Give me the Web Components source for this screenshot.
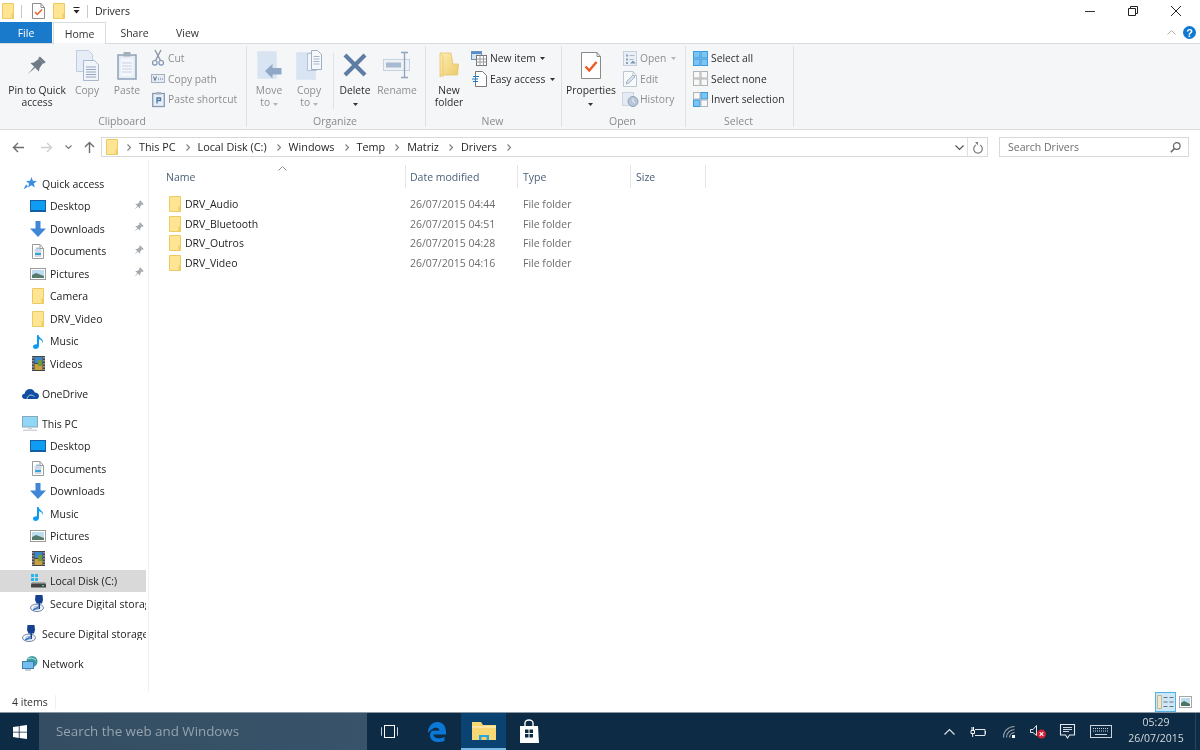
<!DOCTYPE html>
<html><head><meta charset="utf-8"><title>Drivers</title>
<style>
html,body{margin:0;padding:0;width:1200px;height:750px;overflow:hidden;background:#fff}
body{font:10.5px/12px "Open Sans","Noto Sans",sans-serif;color:#1e1e1e;display:flex;flex-direction:column;filter:blur(.3px)}
</style></head><body>
<title-bar></title-bar>
<ribbon-tabs></ribbon-tabs>
<ribbon-bar></ribbon-bar>
<address-bar></address-bar>
<main-pane></main-pane>
<status-bar></status-bar>
<task-bar></task-bar>
<script>
const page=(l='#fff',s='#8d8d8d',w=12,h=15)=>`<path d="M.5.5H${w-4}L${w-.5} 4.5V${h-.5}H.5z" fill="${l}" stroke="${s}"/><path d="M${w-4} .5V4.5H${w-.5}" fill="none" stroke="${s}"/>`;
const four=(a,b,c,d,sa,sb,sc,sd)=>`<rect x=".5" y=".5" width="6.500" height="6.500" fill="${a}" stroke="${sa}"/><rect x="8" y=".5" width="6.500" height="6.500" fill="${b}" stroke="${sb}"/><rect x=".5" y="8" width="6.500" height="6.500" fill="${c}" stroke="${sc}"/><rect x="8" y="8" width="6.500" height="6.500" fill="${d}" stroke="${sd}"/>`;
const ICONS={
folder:[12,16,`<path d="M.5.5h11v15H.5z" fill="#fde594" stroke="#eec962"/><path d="M9.500 11l2-1.500v6h-2z" fill="#f2cb63"/>`],
bigfolder:[20,26,`<defs><linearGradient id="g" x1="0" y1="0" x2="1" y2="1"><stop offset="0" stop-color="#fdeeb2"/><stop offset="1" stop-color="#ecc869"/></linearGradient></defs><path d="M1 1h11l2 11h5.500l-1 11H4L1 25z" fill="url(#g)" stroke="#e6c56c" stroke-width=".8"/><path d="M1 1l3 3v21" fill="none" stroke="#eccb76"/>`],
props:[13,16,page('#fff','#8d8d8d',13,16)+`<path d="M3 9l2.300 2.500L10 6.500" fill="none" stroke="#e8622a" stroke-width="1.500"/>`],
propsL:[20,27,page('#fff','#8a8a8a',20,27)+`<path d="M4.500 14.500l3.800 4L15.500 10" fill="none" stroke="#ea5a1e" stroke-width="2.400"/>`],
minidrop:[7,8,`<path d="M.5 .5h6" stroke="#222"/><path d="M.5 3h6L3.500 6.500z" fill="#222"/>`],
caret:[5,3,`<path d="M0 0h5L2.500 3z" fill="#333"/>`],
caretL:[5,3,`<path d="M0 0h5L2.500 3z" fill="#b5b5b5"/>`],
pinL:[20,20,`<g transform="translate(-2 2) rotate(45 10 10)" fill="#6e7a86"><rect x="6" y="-1" width="8" height="2.500"/><path d="M7 1.500h6l1 6 2 3H4l2-3z"/><path d="M9.300 10.500h1.400L10 20z"/></g>`],
pin:[10,10,`<g transform="rotate(45 5 5)" fill="#a4a9ae"><rect x="2.500" y="-.5" width="5" height="1.500"/><path d="M3.500 1h3l.5 3 1.500 1.500h-7L3 4z"/><path d="M4.500 5.500h1L5 10z"/></g>`],
copyL:[23,31,`<path d="M.5.5h12l4 4v17H.5z" fill="#e6edf6" stroke="#bfcde0"/><path d="M7.500 10.500h11l4 4v16h-15z" fill="#f1f5fa" stroke="#a9b9cd"/><path d="M10 17h10M10 19.500h10M10 22h10M10 24.500h10M10 27h10" stroke="#93a6bf"/>`],
pasteL:[20,29,`<rect x="1" y="4" width="18" height="24" fill="#e3ebf5" stroke="#8fa3bb" stroke-width="1.500"/><rect x="3.500" y="7.500" width="13" height="18" fill="#f3f6fa"/><path d="M5 12h10M5 15h10M5 18h10M5 21h10" stroke="#c9d4e2"/><rect x="6.500" y="1" width="7" height="4.500" fill="#a5afbb"/>`],
cut:[12,16,`<path d="M3 0l5.500 10.500M9 0L3.500 10.500" stroke="#8a97a8" stroke-width="1.400" fill="none"/><circle cx="2.800" cy="12.800" r="2.300" fill="none" stroke="#7f94b4" stroke-width="1.200"/><circle cx="9.200" cy="12.800" r="2.300" fill="none" stroke="#7f94b4" stroke-width="1.200"/>`],
copypath:[14,9,`<rect x=".5" y=".5" width="13" height="8" fill="#e4ebf3" stroke="#a5b1c2"/><path d="M2.500 2.500l1.500 4 1.500-4M7 5h1M9 5h1M11 5h1" fill="none" stroke="#60748f"/>`],
pasteshort:[13,15,`<rect x=".7" y="1.500" width="11.600" height="13" fill="#e8eef6" stroke="#849ab6" stroke-width="1.300"/><rect x="4" y="0" width="5" height="2.500" fill="#a6b1bf"/><path d="M5 11.500V6h3.500v2.500H5" fill="none" stroke="#4e78a8" stroke-width="1.300"/>`],
moveL:[25,29,`<rect x=".5" y=".5" width="19" height="27" fill="#d8e4f2" stroke="#dfe8f3"/><path d="M8 20l7.500-7v4h9v6.500h-9v4z" fill="#8ea8c6"/>`],
copyto:[26,30,`<rect x=".5" y="2.500" width="19" height="27" fill="#d8e4f2" stroke="#dfe8f3"/><path d="M11.500 3.500h9v17h-9z" fill="#f2f5fa" stroke="#b2c1d4"/><path d="M15.500.5h6l4 4v15h-10z" fill="#f6f8fb" stroke="#9fb0c6"/><path d="M17.500 6.500h6M17.500 9h6M17.500 11.500h6M17.500 14h6" stroke="#a5b5c9"/>`],
del:[24,24,`<path d="M2 2l20 20M22 2L2 22" stroke="#5f7ca4" stroke-width="4.200"/>`],
rename:[28,26,`<rect x=".5" y="7.500" width="26" height="11" fill="#eef2f7" stroke="#c7d2df"/><rect x="3" y="10.500" width="15" height="5" fill="#a8bad0"/><path d="M18 .5h3.500M25 .5h-3.500M21.500.5v25M18 25.500h7" fill="none" stroke="#8ea4bf" stroke-width="1.300"/>`],
newitem:[16,15,`<rect x=".5" y=".5" width="10" height="8" fill="#d5e3f3" stroke="#6f90b7"/><rect x="1" y="1" width="9" height="2" fill="#5390d0"/><rect x="5.500" y="4.500" width="10" height="10" fill="#fff" stroke="#777"/><path d="M5.500 8h10M5.500 11h10M9 4.500v10M12.500 4.500v10" stroke="#999"/>`],
easy:[15,16,`<path d="M3.500.5h7l4 4v11h-11z" fill="#fff" stroke="#777"/><path d="M1 5.500h6M0 8h6M1 10.500h5" stroke="#1679cf" stroke-width="1.100"/>`],
open:[14,15,`<rect x=".5" y=".5" width="13" height="14" fill="#eaeff6" stroke="#c6d0dd"/><path d="M3 3.500h2v2H3zM3 7.500h2v2H3zM3 11h2v2H3z" fill="#8aa0bd"/><path d="M6.500 4.500h5M6.500 8.500h4" stroke="#a9b8ca"/><path d="M7 12.500l3-3 3 3z" fill="#7f96b4"/>`],
edit:[14,16,page('#f7f9fb','#bcc6d3',14,16)+`<path d="M3 13l1-3 6-6 2 2-6 6z" fill="#d6e1ee" stroke="#a7b8cc"/>`],
history:[17,15,`<rect x=".5" y=".5" width="11" height="13" fill="#e4ebf4" stroke="#ccd5e1"/><circle cx="11" cy="9.500" r="5" fill="#b7c5d7" stroke="#8fa3bc"/><path d="M11 6.500v3l2 1.500" fill="none" stroke="#f4f7fa"/>`],
selall:[15,15,four('#7cc4f2','#7cc4f2','#7cc4f2','#7cc4f2','#3a9ae0','#3a9ae0','#3a9ae0','#3a9ae0')],
selnone:[15,15,four('#f8f8f8','#f8f8f8','#f8f8f8','#f8f8f8','#b3b3b3','#b3b3b3','#b3b3b3','#b3b3b3')],
selinv:[15,15,four('#f8f8f8','#7cc4f2','#7cc4f2','#f8f8f8','#b3b3b3','#3a9ae0','#3a9ae0','#b3b3b3')],
back:[12,11,`<path d="M12 5.500H1.500M6 1L1.500 5.500 6 10" fill="none" stroke="#6d6d6d" stroke-width="1.400"/>`],
fwd:[12,11,`<path d="M0 5.500h10.500M6 1l4.500 4.500L6 10" fill="none" stroke="#cfcfcf" stroke-width="1.400"/>`],
down:[7,4,`<path d="M.5.5l3 3 3-3" fill="none" stroke="#777" stroke-width="1.200"/>`],
up:[11,12,`<path d="M5.500 12V1.500M1 6l4.500-4.500L10 6" fill="none" stroke="#6d6d6d" stroke-width="1.400"/>`],
chev:[4,7,`<path d="M.5.5l3 3-3 3" fill="none" stroke="#7d7d7d" stroke-width="1.100"/>`],
chevd:[9,5,`<path d="M.5.5l4 4 4-4" fill="none" stroke="#555" stroke-width="1.200"/>`],
refresh:[10,11,`<path d="M3 3a4.300 4.300 0 1 0 4 0" fill="none" stroke="#7b7b7b" stroke-width="1.200"/><path d="M2 0l3 0v3.500z" fill="#7b7b7b"/>`],
search:[11,11,`<circle cx="6.800" cy="4" r="3.300" fill="none" stroke="#666" stroke-width="1.200"/><path d="M4.500 6.500L.8 10.300" stroke="#666" stroke-width="1.600"/>`],
star:[14,13,`<path d="M8.500 0l1.400 3.800 4 .3-3.100 2.500 1 3.900-3.300-2.200-3.400 2.200 1-3.900-3-2.500 4-.3z" fill="#3b8ee0"/><path d="M3 7.500L.5 12.500 5 9.500z" fill="#3b8ee0"/>`],
desktop:[16,12,`<rect x=".5" y=".5" width="15" height="11" fill="#0f9cf3" stroke="#1b5f9f"/><path d="M1 10.500h14" stroke="#0e5ea6"/>`],
dl:[16,16,`<path d="M5.500 0h5v7.500H16L8 16 0 7.500h5.500z" fill="#3f87d6"/>`],
docs:[12,15,page('#fff','#9a9a9a',12,15)+`<path d="M2.500 6h7M2.500 8h7M2.500 12h7" stroke="#9fb4c8"/><rect x="3" y="9" width="6" height="2" fill="#3aa0dc"/><rect x="4" y="3.500" width="4" height="1.500" fill="#9dc1dc"/>`],
pics:[16,12,`<rect x=".5" y=".5" width="15" height="11" fill="#fff" stroke="#9c9c9c"/><rect x="2" y="2" width="12" height="8" fill="#bcdcef"/><path d="M2 7l4-2 8 3v2H2z" fill="#557a6c"/>`],
music:[11,15,`<path d="M4 1h1.500c.5 3 5 3.500 4.500 8-1-2.500-2.500-3.500-4-3.800V12c0 2-2 3-3.500 3S0 14 0 12.500 2 10 4 10.300z" fill="#0d9bf0"/>`],
video:[13,15,`<rect width="13" height="15" fill="#43464b"/><rect x="2.500" y="1" width="8" height="6" fill="#3b88c9"/><rect x="2.500" y="8" width="8" height="6" fill="#c8a13e"/><rect x="6" y="4" width="4" height="6" fill="#6f9a3e"/><path d="M1 1v13M12 1v13" stroke="#ddd" stroke-dasharray="1.500 1.500"/>`],
cloud:[17,10,`<path d="M3.500 10C1 10 0 8.700 0 7.200S1.200 4.700 2.500 4.700C3 2 5.500 0 8 0c2.600 0 4.200 1.600 4.800 3.600C15 3.600 17 5 17 7.200S15.200 10 13.500 10z" fill="#0f4ea1"/><path d="M5 10c0-2 2-4 4-4 2.500 0 3 1.500 3.500 2" fill="none" stroke="#fff" stroke-width=".7"/>`],
pc:[16,15,`<rect x=".5" y=".5" width="15" height="10.500" fill="#8fd6f7" stroke="#83aabb"/><path d="M6 11h4v2H6z" fill="#c9d1d6"/><path d="M1 13.500h14v1.500H1z" fill="#cfd6da"/>`],
drive:[15,14,`<path d="M0 0h3v3H0zM4 0h3v3H4zM0 4h3v3H0zM4 4h3v3H4z" fill="#29b6ee"/><path d="M1 8.500h13l1 2v3H0v-3z" fill="#444"/><path d="M1 8.500h13v1H1z" fill="#bbb"/><rect x="11" y="11" width="2" height="1.200" fill="#4ce08a"/>`],
sd:[16,17,`<ellipse cx="7" cy="12.800" rx="6.500" ry="3.700" fill="#f1f4f8" stroke="#6c82a6"/><ellipse cx="7" cy="12.800" rx="3" ry="1.400" fill="none" stroke="#9fb2cc"/><path d="M5.500 0h7l.5 5-1 3.500H6.500L5 5z" fill="#14418f"/><path d="M8.500 8h1.500v6H8.500z" fill="#14418f"/><path d="M3 15l5-2.500" stroke="#2e74c9" stroke-width="1.400"/>`],
net:[16,15,`<circle cx="10" cy="5.500" r="5.500" fill="#3b9c9d"/><path d="M6 3c3-2 6 0 8 1" stroke="#bfe8e8" fill="none"/><rect x=".5" y="5.500" width="11" height="7" fill="#73bdec" stroke="#3d7fb5"/><path d="M3 13h6v2H3z" fill="#c5ced6"/>`],
details:[17,14,`<path d="M.5.5h4v13h-4z" fill="#efe8cc" stroke="#bdb89a"/><path d="M6.500 2.500h4M12.500 2.500h4M6.500 7h4M12.500 7h4M6.500 11.500h4M12.500 11.500h4" stroke="#6e6e6e"/>`],
large:[13,12,`<rect x=".5" y=".5" width="12" height="11" fill="#fff" stroke="#a6a6a6"/><rect x="2" y="2" width="9" height="8" fill="#bcdcef"/><path d="M2 7l3-2 6 3v2H2z" fill="#4c7465"/>`],
win:[14,14,`<path d="M0 2.100L5.800 1.200V6.700H0zM6.600 1.100L14 0V6.700H6.600zM0 7.400H5.800V12.900L0 12zM6.600 7.400H14V14L6.600 12.900z" fill="#fff"/>`],
taskview:[17,13,`<rect x="3.500" y=".5" width="10" height="12" fill="none" stroke="#fff"/><path d="M1 2.500H.5v8H1M16 2.500h.5v8H16" fill="none" stroke="#c8ced4"/>`],
edge:[19,20,`<path d="M1 11C1 4.500 5 0 10.500 0 15.500 0 19 3.500 19 10.500v2H6.500c0 3.800 5.500 5.200 11 2.500v4c-7 2.500-14 .5-14.500-5-.2-2 .8-4 2-5.300L12.500 8.500c0-3-4.500-4-7.500-1.300C3.500 8.500 2 9.500 1 11z" fill="#0b78d7"/>`],
tfolder:[24,18,`<path d="M0 0h9l2 3h13v15H0z" fill="#f8d775"/><path d="M0 4h24v2H0z" fill="#fbe7a3"/><path d="M7 18v-5h10v5zM9.500 15h5v3h-5z" fill="#2aa6e0"/><path d="M9.500 15h5v3h-5z" fill="#f6d068"/>`],
store:[20,23,`<path d="M6 6V3a4 3 0 0 1 8 0v3" fill="none" stroke="#fff" stroke-width="1.400"/><path d="M1 6h18l1 17H1z" fill="#fff"/><path d="M6 9.500h3.500V13H6zM10.500 9.500H14V13h-3.500zM6 14h3.500v3.500H6zM10.500 14H14v3.500h-3.500z" fill="#0d2b44"/>`],
trayup:[11,6,`<path d="M.5 5.500l5-5 5 5" fill="none" stroke="#dde3e8" stroke-width="1.200"/>`],
battery:[16,10,`<path d="M5 2.500h10v6H5" fill="none" stroke="#e0e5e9" stroke-width="1"/><path d="M15.500 4v3" stroke="#e0e5e9"/><path d="M1 3.500h3.500v3H1zM2 0v3.500M3.500 0v3.500M2.700 6.500V10" fill="none" stroke="#fff"/>`],
wifi:[12,12,`<path d="M.5 11.500C.5 5 5 .8 11.500.5M3.500 11.500C3.500 7 7 3.800 11.500 3.500M6.500 11.500C6.500 9 8.800 6.800 11.500 6.500" fill="none" stroke="#98a4ae" stroke-width="1.200"/><rect x="9" y="9" width="3" height="3" fill="#fff"/>`],
sound:[17,14,`<path d="M.5 4.500h2.500L6.500.5v10L3 7.500H.5z" fill="none" stroke="#dfe4e8"/><circle cx="11.500" cy="9" r="4.500" fill="#d41f36"/><path d="M9.700 7.200l3.600 3.600M13.300 7.200l-3.600 3.600" stroke="#fff" stroke-width="1.100"/>`],
notif:[15,15,`<path d="M.5.5h14v10.500H9.500L7.500 14 5.500 11H.5z" fill="none" stroke="#e6eaee" stroke-width="1.100"/><path d="M3 3.500h9M3 5.500h9M3 7.500h6" stroke="#e6eaee" stroke-width=".9"/>`],
kbd:[22,13,`<rect x=".5" y=".5" width="21" height="12" fill="none" stroke="#cdd3d8"/><path d="M3 3.500h16M3 6h16" stroke="#cdd3d8" stroke-dasharray="1 1"/><path d="M5 9.500h12" stroke="#cdd3d8"/>`]
};
const def=(n,css,html)=>{customElements.define(n,class extends HTMLElement{
  constructor(){super();this.attachShadow({mode:'open'})}
  connectedCallback(){if(!this.shadowRoot.innerHTML)this.shadowRoot.innerHTML=`<style>${css}</style>${typeof html==='function'?html(this):html}`}
})};
customElements.define('x-icon',class extends HTMLElement{
  constructor(){super();this.attachShadow({mode:'open'})}
  connectedCallback(){const[w,h,s]=ICONS[this.getAttribute('name')];
    this.shadowRoot.innerHTML=`<style>:host{display:inline-flex;flex:none}svg{display:block;overflow:visible}</style><svg width="${w}" height="${h}" viewBox="0 0 ${w} ${h}">${s}</svg>`}
});
def('title-bar',`:host{display:flex;align-items:center;height:22px;flex:none;padding-left:2px;box-sizing:border-box}
 .s{width:1px;height:13px;background:#c8c8c8}
 .t{margin-left:7px}.c{margin-left:auto;display:flex;align-items:center}
 .b{width:43px;display:flex;justify-content:center}`,
 `<x-icon name="folder"></x-icon><span class="s" style="margin:0 10px 0 7px"></span><x-icon name="props"></x-icon><x-icon name="folder" style="margin-left:8px"></x-icon><x-icon name="minidrop" style="margin-left:8px"></x-icon><span class="s" style="margin-left:7px"></span><span class="t">Drivers</span>
 <span class="c"><span class="b"><svg width="10" height="10"><path d="M0 5.500h10" stroke="#333"/></svg></span><span class="b"><svg width="10" height="10"><path d="M.5 2.500h7v7h-7zM2.500 2.500v-2h7v7h-2" fill="none" stroke="#222"/></svg></span><span class="b" style="margin-right:3px"><svg width="10" height="10"><path d="M0 0l10 10M10 0L0 10" stroke="#222"/></svg></span></span>`);
def('ribbon-tabs',`:host{display:flex;height:21px;flex:none;position:relative;z-index:1;align-items:stretch}
 span{display:flex;align-items:center;justify-content:center;color:#333}
 .f{width:52px;background:#1979ca;color:#fff}
 .h{width:53px;border:1px solid #dadbdc;border-bottom:0;background:linear-gradient(#fff,#fff 90%,#f5f6f7);margin-bottom:-1px;box-sizing:border-box;height:22px;margin-left:1px}
 .o{width:53px;margin-left:2px}
 .r{margin-left:auto;gap:7px;padding-right:4px}`,
 `<span class="f">File</span><span class="h">Home</span><span class="o">Share</span><span class="o" style="margin-left:0">View</span>
 <span class="r"><svg width="9" height="5"><path d="M.5 4.500l4-4 4 4" fill="none" stroke="#b0b0b0"/></svg><svg width="13" height="13"><circle cx="6.500" cy="6.500" r="6.500" fill="#0f78d0"/><text x="6.500" y="10.500" text-anchor="middle" font-family="Liberation Sans" font-weight="700" font-size="11" fill="#fff">?</text></svg></span>`);
def('ribbon-bar',`:host{display:flex;height:87px;flex:none;background:#f5f6f7;border-top:1px solid #dadbdc;border-bottom:1px solid #dadbdc;box-sizing:border-box;font-size:10.3px}`,
 `<ribbon-group label="Clipboard" style="width:247px">
   <ribbon-large name="pinL" style="width:74px">Pin to Quick<br>access</ribbon-large>
   <ribbon-large name="copyL" off style="width:26px">Copy</ribbon-large>
   <ribbon-large name="pasteL" off style="width:40px;margin-left:7px">Paste</ribbon-large>
   <ribbon-col style="margin-left:3px"><ribbon-small name="cut" off>Cut</ribbon-small><ribbon-small name="copypath" off>Copy path</ribbon-small><ribbon-small name="pasteshort" off>Paste shortcut</ribbon-small></ribbon-col>
  </ribbon-group>
  <ribbon-group label="Organize" style="width:179px;padding-left:7px">
   <ribbon-large name="moveL" off style="width:30px">Move<br>to <x-icon name="caretL"></x-icon></ribbon-large>
   <ribbon-large name="copyto" off style="width:30px;margin-left:10px">Copy<br>to <x-icon name="caretL"></x-icon></ribbon-large>
   <v-rule></v-rule>
   <ribbon-large name="del" style="width:40px;margin-left:1px">Delete<br><x-icon name="caret"></x-icon></ribbon-large>
   <ribbon-large name="rename" off style="width:44px">Rename</ribbon-large>
  </ribbon-group>
  <ribbon-group label="New" style="width:136px;padding-left:3px">
   <ribbon-large name="bigfolder" style="width:40px">New<br>folder</ribbon-large>
   <ribbon-col style="margin-left:2px;--g:3px"><ribbon-small name="newitem">New item <x-icon name="caret" style="vertical-align:2px;margin-left:2px"></x-icon></ribbon-small><ribbon-small name="easy">Easy access <x-icon name="caret" style="vertical-align:2px;margin-left:2px"></x-icon></ribbon-small></ribbon-col>
  </ribbon-group>
  <ribbon-group label="Open" style="width:124px;padding-left:1px">
   <ribbon-large name="propsL" style="width:56px">Properties<br><x-icon name="caret"></x-icon></ribbon-large>
   <ribbon-col style="margin-left:3px"><ribbon-small name="open" off>Open <x-icon name="caretL" style="vertical-align:2px;margin-left:2px"></x-icon></ribbon-small><ribbon-small name="edit" off>Edit</ribbon-small><ribbon-small name="history" off>History</ribbon-small></ribbon-col>
  </ribbon-group>
  <ribbon-group label="Select" style="width:108px;padding-left:6px">
   <ribbon-col style="--g:3px"><ribbon-small name="selall">Select all</ribbon-small><ribbon-small name="selnone">Select none</ribbon-small><ribbon-small name="selinv">Invert selection</ribbon-small></ribbon-col>
  </ribbon-group>`);
def('ribbon-group',`:host{display:block;box-sizing:border-box;height:81px;margin-top:2px;border-right:1px solid #e0e1e2;position:relative;flex:none}
 .c{display:flex;height:67px}.l{text-align:center;color:#8a8a8a;font-size:10.5px;height:14px;line-height:13px;position:absolute;left:0;right:2px;bottom:-2px}`,
 h=>`<div class="c"><slot></slot></div><div class="l">${h.getAttribute('label')}</div>`);
def('ribbon-large',`:host{display:flex;flex-direction:column;align-items:center;flex:none;text-align:center;color:#2c2c2c;white-space:nowrap}
 :host([off]){color:#8e8e8e}.i{height:38px;display:flex;align-items:center;justify-content:center}`,
 h=>`<div class="i"><x-icon name="${h.getAttribute('name')}"></x-icon></div><div><slot></slot></div>`);
def('ribbon-col',`:host{display:flex;flex-direction:column;padding-top:2px;flex:none}`,`<slot></slot>`);
def('ribbon-small',`:host{display:flex;align-items:center;gap:var(--g,2px);height:20.6px;color:#2c2c2c;white-space:nowrap}
 :host([off]){color:#8e8e8e}.i{width:16px;display:flex;justify-content:center}`,
 h=>`<span class="i"><x-icon name="${h.getAttribute('name')}"></x-icon></span><span><slot></slot></span>`);
def('v-rule',`:host{display:block;width:1px;height:56px;background:#dfe0e1;margin:7px 0 0 9px;flex:none}`,``);
def('address-bar',`:host{display:flex;align-items:center;height:30px;flex:none;box-sizing:border-box;background:#fff;padding-top:4px}
 .n{display:flex;align-items:center;width:101px;flex:none}
 .box{display:flex;align-items:center;width:887px;height:20px;box-sizing:border-box;border:1px solid #d9d9d9;flex:none}
 .cr{display:flex;align-items:center;flex:1;padding-left:4px;height:100%;font-size:10.8px}
 .cr span{margin:0 10px 0 8px}.cr span.f{margin:0 0 0 9px}
 .dd{margin-right:3px}.rf{width:19px;height:100%;border-left:1px solid #e0e0e0;display:flex;align-items:center;justify-content:center}
 .se{display:flex;align-items:center;justify-content:space-between;margin-left:11px;width:190px;height:20px;box-sizing:border-box;border:1px solid #d9d9d9;padding:0 7px 0 8px;color:#6d6d6d}`,
 `<div class="n"><x-icon name="back" style="margin-left:12px"></x-icon><x-icon name="fwd" style="margin-left:17px"></x-icon><x-icon name="down" style="margin-left:12px"></x-icon><x-icon name="up" style="margin-left:12px"></x-icon></div>
 <div class="box"><div class="cr"><x-icon name="folder"></x-icon><span class="f"></span><x-icon name="chev"></x-icon><span>This PC</span><x-icon name="chev"></x-icon><span>Local Disk (C:)</span><x-icon name="chev"></x-icon><span>Windows</span><x-icon name="chev"></x-icon><span>Temp</span><x-icon name="chev"></x-icon><span>Matriz</span><x-icon name="chev"></x-icon><span>Drivers</span><x-icon name="chev"></x-icon></div><x-icon class="dd" name="chevd"></x-icon><div class="rf"><x-icon name="refresh"></x-icon></div></div>
 <div class="se"><span>Search Drivers</span><x-icon name="search"></x-icon></div>`);
def('main-pane',`:host{display:flex;height:532px;flex:none}`,`<nav-pane></nav-pane><file-list></file-list>`);
def('nav-pane',`:host{display:block;width:149px;box-sizing:border-box;border-right:1px solid #f0f0f0;padding-top:12.4px;flex:none}.g{height:7.5px}`,
 `<nav-item i="22" name="star">Quick access</nav-item>
 <nav-item name="desktop" pin>Desktop</nav-item><nav-item name="dl" pin>Downloads</nav-item><nav-item name="docs" pin>Documents</nav-item><nav-item name="pics" pin>Pictures</nav-item>
 <nav-item name="folder">Camera</nav-item><nav-item name="folder">DRV_Video</nav-item><nav-item name="music">Music</nav-item><nav-item name="video">Videos</nav-item>
 <div class="g"></div><nav-item i="22" name="cloud">OneDrive</nav-item><div class="g"></div>
 <nav-item i="22" name="pc">This PC</nav-item>
 <nav-item name="desktop">Desktop</nav-item><nav-item name="docs">Documents</nav-item><nav-item name="dl">Downloads</nav-item><nav-item name="music">Music</nav-item><nav-item name="pics">Pictures</nav-item><nav-item name="video">Videos</nav-item>
 <nav-item name="drive" sel>Local Disk (C:)</nav-item><nav-item name="sd">Secure Digital storage (D:)</nav-item>
 <div class="g"></div><nav-item i="22" name="sd">Secure Digital storage (D:)</nav-item><div class="g"></div><nav-item i="22" name="net">Network</nav-item>`);
def('nav-item',`:host{display:flex;align-items:center;height:22.5px;width:146px;overflow:hidden;white-space:nowrap;box-sizing:border-box;position:relative;color:#222;gap:4px}
 :host([sel]){background:#d9d9d9}.i{width:16px;display:flex;justify-content:center;flex:none}
 .p{position:absolute;right:3px;top:6px}.t{overflow:hidden}`,
 h=>`<span class="i" style="margin-left:${h.getAttribute('i')||30}px"><x-icon name="${h.getAttribute('name')}"></x-icon></span><span class="t"><slot></slot></span>${h.hasAttribute('pin')?'<x-icon class="p" name="pin"></x-icon>':''}`);
const cols='grid-template-columns:245px 112px 113px 75px;';
def('file-list',`:host{display:block;flex:1;padding:5px 0 0 11px;position:relative}
 .h{display:grid;${cols}height:23px;align-items:center;margin-bottom:6px;color:#4c607a}
 .h span{height:100%;display:flex;align-items:center;padding-left:6px;border-right:1px solid #e5e5e5;box-sizing:border-box;margin-right:-1px}
 .h span:nth-child(2){padding-left:5px}
 .a{position:absolute;left:129px;top:6px}`,
 `<div class="h"><span>Name</span><span>Date modified</span><span>Type</span><span>Size</span></div>
 <svg class="a" width="9" height="5"><path d="M.5 4.500l4-4 4 4" fill="none" stroke="#8d8d8d"/></svg>
 <file-row d="26/07/2015 04:44">DRV_Audio</file-row><file-row d="26/07/2015 04:51">DRV_Bluetooth</file-row><file-row d="26/07/2015 04:28">DRV_Outros</file-row><file-row d="26/07/2015 04:16">DRV_Video</file-row>`);
def('file-row',`:host{display:grid;${cols}height:19.7px;align-items:center;color:#6d6d6d}
 .n{display:flex;align-items:center;gap:4px;padding-left:9px;color:#1e1e1e}.d{padding-left:5px}.t{padding-left:6px}`,
 h=>`<span class="n"><x-icon name="folder"></x-icon><slot></slot></span><span class="d">${h.getAttribute('d')}</span><span class="t">File folder</span>`);
def('status-bar',`:host{display:flex;align-items:center;height:20px;flex:none;padding-left:12px;position:relative;color:#333}
 .s{margin-left:7px;width:1px;height:14px;background:#f0f0f0}
 .v{margin-left:auto;display:flex;align-items:center;height:100%;padding-right:8px}
 .d{width:21px;height:20px;box-sizing:border-box;background:#cce8f8;border:1px solid #52b0e4;display:flex;align-items:center;justify-content:center;margin-right:3px}`,
 `<span>4 items</span><span class="s"></span><span class="v"><span class="d"><x-icon name="details"></x-icon></span><x-icon name="large"></x-icon></span>`);
def('task-bar',`:host{display:flex;align-items:center;height:38px;flex:none;box-sizing:border-box;border-top:1px solid #8b98a3;background:#0d2b44;color:#fff}
 .st{width:39px;display:flex;justify-content:center}
 .q{width:328px;height:100%;background:linear-gradient(90deg,#344d62,#38536a);color:#95a3af;font-size:13.350px;display:flex;align-items:center;padding:0 0 1px 17px;box-sizing:border-box}
 .it{display:flex;justify-content:center;align-items:center;height:100%;flex:none}
 .ex{width:45px;background:#0a4272;box-sizing:border-box;border-bottom:2px solid #7ab8e6}
 .cl{margin:-3px 6px 0 auto;text-align:center;line-height:16px;color:#d4dade;width:66px}
 .end{width:1px;height:100%;background:#2a4358;margin-right:4px}`,
 `<span class="st"><x-icon name="win"></x-icon></span><span class="q">Search the web and Windows</span>
 <span class="it" style="width:45px"><x-icon name="taskview"></x-icon></span><span class="it" style="width:49px"><x-icon name="edge"></x-icon></span>
 <span class="it ex"><x-icon name="tfolder"></x-icon></span><span class="it" style="width:45px"><x-icon name="store"></x-icon></span>
 <span class="it" style="margin-left:393px"><x-icon name="trayup"></x-icon></span>
 <x-icon name="battery" style="margin-left:15px"></x-icon><x-icon name="wifi" style="margin-left:17px"></x-icon><x-icon name="sound" style="margin-left:15px"></x-icon><x-icon name="notif" style="margin-left:13px"></x-icon><x-icon name="kbd" style="margin-left:15px"></x-icon>
 <span class="cl">05:29<br>26/07/2015</span><span class="end"></span>`);
</script>
</body></html>
